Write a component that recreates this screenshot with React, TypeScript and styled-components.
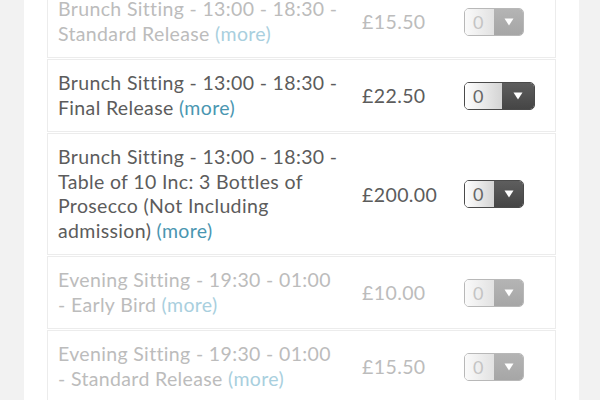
import styled, { createGlobalStyle } from 'styled-components'

const GlobalStyle = createGlobalStyle`
  html, body {
    margin: 0;
    padding: 0;
    background: #f2f2f2;
    overflow: hidden;
  }
  body {
    font-family: Lato, "Open Sans", sans-serif;
  }
`

const Page = styled.div`
  width: 600px;
  height: 400px;
  padding: 0 21px 0 24px;
  box-sizing: border-box;
  overflow: hidden;
`

const Panel = styled.div`
  background: #ffffff;
  height: 100%;
  padding: 0 23px;
  overflow: hidden;
`

const List = styled.div`
  margin-top: -15px;
  display: flex;
  flex-direction: column;
  gap: 1px;
`

const Row = styled.div`
  display: grid;
  grid-template-columns: 304px 102px 1fr;
  align-items: center;
  padding: 11px 0 11px 10px;
  border: 1px solid #ececec;
  background: #fff;
`

interface DimProps {
  $disabled: boolean;
}

const Title = styled.div<DimProps>`
  font-size: 19.5px;
  line-height: 24.5px;
  letter-spacing: 0.35px;
  color: ${(p) => (p.$disabled ? '#bcbcbc' : '#5c5c5c')};
`

const Line = styled.span`
  display: block;
  white-space: nowrap;
`

const More = styled.span<DimProps>`
  color: ${(p) => (p.$disabled ? '#a9cfde' : '#4a96b1')};
`

const Price = styled.div<DimProps>`
  font-size: 19.5px;
  letter-spacing: 0.4px;
  color: ${(p) => (p.$disabled ? '#bcbcbc' : '#5c5c5c')};
`

interface SelectProps extends DimProps {
  $wide: boolean;
}

const Select = styled.div<SelectProps>`
  display: flex;
  width: ${(p) => (p.$wide ? '71px' : '60px')};
  height: 28px;
  border: 1px solid ${(p) => (p.$disabled ? '#b8b8b8' : '#4a4a4a')};
  border-radius: 5px;
  overflow: hidden;
  box-sizing: border-box;
`

const SelectValue = styled.div<DimProps>`
  flex: 1;
  display: flex;
  align-items: center;
  padding-left: 8px;
  font-size: 18px;
  color: ${(p) => (p.$disabled ? '#c4c4c4' : '#666')};
  background: ${(p) =>
    p.$disabled
      ? 'linear-gradient(to right, #fafafa, #e2e2e2)'
      : 'linear-gradient(to right, #ffffff, #d4d4d4)'};
`

const SelectArrow = styled.div<SelectProps>`
  width: ${(p) => (p.$wide ? '32px' : '29px')};
  display: flex;
  align-items: center;
  justify-content: center;
  background: ${(p) =>
    p.$disabled
      ? 'linear-gradient(#b4b4b4, #a6a6a6)'
      : 'linear-gradient(#5e5e5e, #454545)'};
`

const Arrow = () => (
  <svg width="10" height="8" viewBox="0 0 10 8">
    <path d="M0.5 0.5 H9.5 L5 7.5 Z" fill="#fff" />
  </svg>
)

const tickets = [
  { lines: ['Brunch Sitting - 13:00 - 18:30 -', 'Standard Release'], price: '£15.50', disabled: true, wide: false },
  { lines: ['Brunch Sitting - 13:00 - 18:30 -', 'Final Release'], price: '£22.50', disabled: false, wide: true },
  {
    lines: ['Brunch Sitting - 13:00 - 18:30 -', 'Table of 10 Inc: 3 Bottles of', 'Prosecco (Not Including', 'admission)'],
    price: '£200.00',
    disabled: false,
    wide: false,
  },
  { lines: ['Evening Sitting - 19:30 - 01:00', '- Early Bird'], price: '£10.00', disabled: true, wide: false },
  { lines: ['Evening Sitting - 19:30 - 01:00', '- Standard Release'], price: '£15.50', disabled: true, wide: false },
]

export default function App() {
  return (
    <>
      <GlobalStyle />
      <Page>
        <Panel>
          <List>
            {tickets.map((t, i) => (
              <Row key={i}>
                <Title $disabled={t.disabled}>
                  {t.lines.map((l, j) => (
                    <Line key={j}>
                      {l}
                      {j === t.lines.length - 1 && (
                        <>
                          {' '}
                          <More $disabled={t.disabled}>(more)</More>
                        </>
                      )}
                    </Line>
                  ))}
                </Title>
                <Price $disabled={t.disabled}>{t.price}</Price>
                <Select $disabled={t.disabled} $wide={t.wide}>
                  <SelectValue $disabled={t.disabled}>0</SelectValue>
                  <SelectArrow $disabled={t.disabled} $wide={t.wide}>
                    <Arrow />
                  </SelectArrow>
                </Select>
              </Row>
            ))}
          </List>
        </Panel>
      </Page>
    </>
  )
}
